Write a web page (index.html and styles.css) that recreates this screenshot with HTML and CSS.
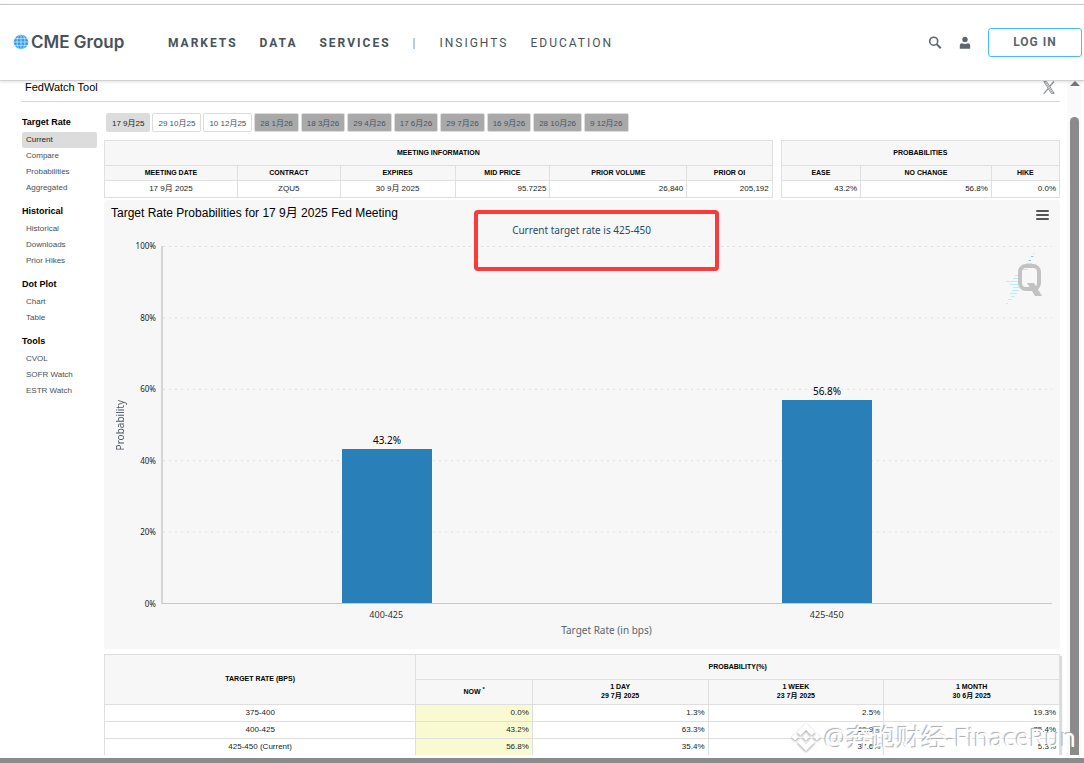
FILE: index.html
```html
<!DOCTYPE html>
<html lang="en">
  <head>
    <meta charset="UTF-8" />
    <meta name="viewport" content="width=device-width, initial-scale=1.0" />
    <title>FedWatch Tool - CME Group</title>
    <link rel="stylesheet" href="styles.css">
  </head>
  <body>
    <header class="site-header">
      <a class="logo" href="#">
        <svg class="logo-globe" viewBox="0 0 16 16" width="16" height="16">
          <circle cx="8" cy="8" r="7.2" fill="#2e9bf0" />
          <g fill="none" stroke="#d8eefd" stroke-width="0.7">
            <path d="M0 4.6h16M0 8h16M0 11.4h16M8 0v16" />
            <ellipse cx="8" cy="8" rx="4" ry="7.6" />
          </g>
        </svg>
        <span>CME Group</span>
      </a>
      <nav class="main-nav">
        <a class="strong" href="#">MARKETS</a>
        <a class="strong" href="#">DATA</a>
        <a class="strong" href="#">SERVICES</a>
        <span class="divider">|</span>
        <a href="#">INSIGHTS</a>
        <a href="#">EDUCATION</a>
      </nav>
      <div class="header-actions">
        <button class="icon-btn" aria-label="Search">
          <svg viewBox="0 0 14 14" width="14" height="14" fill="none" stroke="#5b666e">
            <circle cx="5.7" cy="5.2" r="4" stroke-width="1.6" />
            <path d="M8.6 8.1l4.2 4.2" stroke-width="2" />
          </svg>
        </button>
        <button class="icon-btn" aria-label="Account">
          <svg viewBox="0 0 12 14" width="12" height="14" fill="#5b666e">
            <circle cx="6" cy="3.5" r="2.7" />
            <path d="M0.8 12.8v-3.2q0-2.3 2.3-2.3q2.9 1.3 5.8 0q2.3 0 2.3 2.3v3.2z" />
          </svg>
        </button>
        <button class="login-btn">LOG IN</button>
      </div>
    </header>

    <div class="frame">
      <main class="content">
        <div class="tool-head">
          <h1>FedWatch Tool</h1>
          <a href="#" aria-label="Share on X">
            <svg viewBox="0 0 12 13" width="12" height="13" fill="none" stroke="#8d9297">
              <path d="M0.8 0.6h2.8l7.6 11.8h-2.8z" />
              <path d="M2.2 0.6l7.6 11.8" stroke-width="0.8" />
              <path d="M11 0.5l-4.4 5M5.4 7.4l-4.6 5.2" stroke-width="1.3" />
            </svg>
          </a>
        </div>

        <div class="tool-body">
          <aside class="sidebar">
            <section>
              <h2>Target Rate</h2>
              <a class="active" href="#">Current</a>
              <a href="#">Compare</a>
              <a href="#">Probabilities</a>
              <a href="#">Aggregated</a>
            </section>
            <section>
              <h2>Historical</h2>
              <a href="#">Historical</a>
              <a href="#">Downloads</a>
              <a href="#">Prior Hikes</a>
            </section>
            <section>
              <h2>Dot Plot</h2>
              <a href="#">Chart</a>
              <a href="#">Table</a>
            </section>
            <section>
              <h2>Tools</h2>
              <a href="#">CVOL</a>
              <a href="#">SOFR Watch</a>
              <a href="#">ESTR Watch</a>
            </section>
          </aside>

          <div class="panel">
            <div class="tabs">
              <button class="tab active">17 9月25</button>
              <button class="tab">29 10月25</button>
              <button class="tab">10 12月25</button>
              <button class="tab far">28 1月26</button>
              <button class="tab far">18 3月26</button>
              <button class="tab far">29 4月26</button>
              <button class="tab far">17 6月26</button>
              <button class="tab far">29 7月26</button>
              <button class="tab far">16 9月26</button>
              <button class="tab far">28 10月26</button>
              <button class="tab far">9 12月26</button>
            </div>

            <div class="info-row">
              <table class="meeting">
                <colgroup>
                  <col class="col-date">
                  <col class="col-contract">
                  <col class="col-expires">
                  <col class="col-price">
                  <col class="col-volume">
                  <col>
                </colgroup>
                <thead>
                  <tr class="group"><th colspan="6">MEETING INFORMATION</th></tr>
                  <tr>
                    <th>MEETING DATE</th>
                    <th>CONTRACT</th>
                    <th>EXPIRES</th>
                    <th>MID PRICE</th>
                    <th>PRIOR VOLUME</th>
                    <th>PRIOR OI</th>
                  </tr>
                </thead>
                <tbody>
                  <tr>
                    <td class="center">17 9月 2025</td>
                    <td class="center">ZQU5</td>
                    <td class="center">30 9月 2025</td>
                    <td>95.7225</td>
                    <td>26,840</td>
                    <td>205,192</td>
                  </tr>
                </tbody>
              </table>
              <table class="moves">
                <colgroup>
                  <col class="col-ease"><col class="col-same"><col>
                </colgroup>
                <thead>
                  <tr class="group"><th colspan="3">PROBABILITIES</th></tr>
                  <tr><th>EASE</th><th>NO CHANGE</th><th>HIKE</th></tr>
                </thead>
                <tbody>
                  <tr><td>43.2%</td><td>56.8%</td><td>0.0%</td></tr>
                </tbody>
              </table>
            </div>

            <div class="chart">
              <div class="chart-head">
                <h3>Target Rate Probabilities for 17 9月 2025 Fed Meeting</h3>
                <button class="menu-btn" aria-label="Chart menu"><i></i><i></i><i></i></button>
              </div>
              <p class="chart-subtitle">Current target rate is 425-450</p>
              <div class="highlight"></div>
              <div class="chart-grid">
                <div class="y-title">Probability</div>
                <div class="y-axis">
                  <span>100%</span>
                  <span>80%</span>
                  <span>60%</span>
                  <span>40%</span>
                  <span>20%</span>
                  <span>0%</span>
                </div>
                <div class="plot">
                  <div class="bar-slot">
                    <span class="bar-label">43.2%</span>
                    <div class="bar" style="height: 43.2%"></div>
                  </div>
                  <div class="bar-slot">
                    <span class="bar-label">56.8%</span>
                    <div class="bar" style="height: 56.8%"></div>
                  </div>
                </div>
                <div class="x-axis">
                  <span>400-425</span>
                  <span>425-450</span>
                </div>
                <div class="x-title">Target Rate (in bps)</div>
              </div>
              <svg class="quik-mark" viewBox="0 0 40 56" width="40" height="56">
                <g stroke="#b4f0fb" stroke-width="1.2">
                  <path d="M31 3.5h1.5M29 6.5h3M26 10.500h3M24 13.500h6M21 16.500h6M19 19.500h7M16 22.500h3M13 25.500h5M11 28.500h6M4 31.500h13M8 34.500h9M11 37.500h6M10 40.500h7M8 43.500h7M9 46.500h4M6 49.500h4M4 53.500h2" />
                </g>
                <path d="M29 6.500h2M27 10.500h2" stroke="#8fc3e6" />
                <rect x="18" y="16" width="19" height="23" rx="6" fill="none" stroke="#c2c2c2" stroke-width="4" />
                <path d="M25 33h7l8 13h-7z" fill="#c2c2c2" />
              </svg>
            </div>

            <table class="history">
              <colgroup>
                <col class="col-rate"><col class="col-now"><col><col><col>
              </colgroup>
              <thead>
                <tr class="group">
                  <th rowspan="2">TARGET RATE (BPS)</th>
                  <th colspan="4">PROBABILITY(%)</th>
                </tr>
                <tr class="group">
                  <th>NOW <sup>*</sup></th>
                  <th>1 DAY<br>29 7月 2025</th>
                  <th>1 WEEK<br>23 7月 2025</th>
                  <th>1 MONTH<br>30 6月 2025</th>
                </tr>
              </thead>
              <tbody>
                <tr>
                  <td class="center">375-400</td>
                  <td class="now">0.0%</td>
                  <td>1.3%</td>
                  <td>2.5%</td>
                  <td>19.3%</td>
                </tr>
                <tr>
                  <td class="center">400-425</td>
                  <td class="now">43.2%</td>
                  <td>63.3%</td>
                  <td>59.9%</td>
                  <td>75.4%</td>
                </tr>
                <tr>
                  <td class="center">425-450 (Current)</td>
                  <td class="now">56.8%</td>
                  <td>35.4%</td>
                  <td>37.6%</td>
                  <td>5.3%</td>
                </tr>
              </tbody>
            </table>
          </div>
        </div>
      </main>
      <div class="scrollbar">
        <div class="scroll-up"></div>
        <div class="scroll-thumb"></div>
      </div>
    </div>
    <div class="bottom-edge"></div>

    <div class="watermark">
      <svg viewBox="0 0 30 30" width="30" height="30" fill="#fff">
        <path d="M15 1l9 9-3.500 3.500-5.500-5.500-5.500 5.500-3.500-3.500z" />
        <path d="M15 29l9-9-3.500-3.500-5.500 5.500-5.500-5.500-3.500 3.500z" />
        <path d="M15 11.500l3.500 3.500-3.500 3.500-3.500-3.500z" />
        <path d="M4 11.500l3.500 3.500-3.500 3.500-3.500-3.500zM26 11.500l3.500 3.500-3.500 3.500-3.500-3.500z" />
      </svg>
      <span>@奔跑财经-FinaceRun</span>
    </div>
  </body>
</html>
```
FILE: styles.css
```css
* {
  margin: 0;
  padding: 0;
  box-sizing: border-box;
}

body {
  display: flex;
  flex-direction: column;
  height: 100vh;
  padding-top: 4px;
  position: relative;
  overflow: hidden;
  background: #fff;
  color: #000;
  font-family: "Liberation Sans", Arial, "Noto Sans CJK SC", sans-serif;
  font-size: 8px;
}

a {
  color: inherit;
  text-decoration: none;
}

button {
  font: inherit;
  border: none;
  background: none;
  cursor: pointer;
}

/* Header */
.site-header {
  display: flex;
  align-items: center;
  flex: none;
  height: 77px;
  padding: 0 2px 0 13px;
  border-top: 1px solid #c8c8c8;
  border-bottom: 1px solid #d2d2d2;
  box-shadow: 0 1px 3px rgba(0, 0, 0, 0.12);
  font-family: Roboto, "Liberation Sans", sans-serif;
  color: #47525a;
  z-index: 1;
}

.logo {
  display: flex;
  align-items: center;
  gap: 2px;
  width: 155px;
  padding-bottom: 2px;
  font-family: Inter, sans-serif;
  font-size: 17px;
  font-weight: 600;
  line-height: 18px;
}

.main-nav {
  display: flex;
  gap: 22px;
  font-size: 12px;
  letter-spacing: 2px;
}

.main-nav .strong {
  font-weight: 700;
}

.divider {
  color: #8b9297;
}

.header-actions {
  display: flex;
  align-items: center;
  gap: 17px;
  margin-left: auto;
}

.icon-btn {
  display: flex;
}

.login-btn {
  width: 94px;
  height: 29px;
  padding-bottom: 2px;
  border: 1px solid #3fc1f5;
  border-radius: 3px;
  color: #5b666e;
  font-size: 12px;
  font-weight: 700;
  letter-spacing: 1px;
}

/* Tool frame */
.frame {
  display: flex;
  flex: 1;
  min-height: 0;
  overflow: hidden;
}

.content {
  flex: 1;
  min-width: 0;
  padding: 0 7px 0 22px;
}

.tool-head {
  display: flex;
  align-items: center;
  justify-content: space-between;
  height: 21px;
  padding: 0 5px 8px 3px;
  border-bottom: 1px solid #d6d6d6;
}

.tool-head h1 {
  font-size: 11px;
  font-weight: 400;
}

.tool-head a {
  display: flex;
}

.tool-body {
  display: flex;
  gap: 7px;
  padding-top: 11px;
}

/* Sidebar */
.sidebar {
  width: 75px;
  padding-top: 2px;
}

.sidebar section {
  margin-bottom: 8px;
}

.sidebar h2 {
  margin-bottom: 3px;
  font-size: 9px;
  line-height: 14px;
}

.sidebar a {
  display: block;
  padding-left: 4px;
  line-height: 16px;
  color: #45505c;
}

.sidebar .active {
  background: #dcdcdc;
  border-radius: 2px;
  color: #222;
}

.panel {
  flex: 1;
  min-width: 0;
}

.tabs {
  display: flex;
  gap: 2px;
  padding-left: 2px;
}

.tab {
  height: 19px;
  padding: 0 5px 1px;
  border: 1px solid #dcdcdc;
  border-radius: 2px;
  color: #45505c;
  white-space: nowrap;
}

.tab.active {
  background: #dcdcdc;
  color: #222;
}

.tab.far {
  background: #a9a9a9;
  color: #44546c;
}

/* Tables */
.info-row {
  display: flex;
  gap: 8px;
  margin: 8px 0 2px;
}

table {
  width: 100%;
  border-collapse: collapse;
  table-layout: fixed;
}

.meeting {
  flex: 12;
}

.moves {
  flex: 5;
}

tr {
  height: 17px;
}

thead tr {
  height: 15px;
}

thead .group {
  height: 25px;
}

th,
td {
  padding-bottom: 2px;
  border: 1px solid #dfdfdf;
  line-height: 9px;
}

th {
  background: #f7f7f7;
  font-size: 7px;
}

td {
  padding-right: 3px;
  text-align: right;
  color: #222;
}

td.center {
  padding-right: 0;
  text-align: center;
}

.col-date {
  width: 19.9%;
}

.col-contract {
  width: 15.4%;
}

.col-expires {
  width: 17.2%;
}

.col-price {
  width: 14.2%;
}

.col-volume {
  width: 20.5%;
}

.col-ease {
  width: 28.5%;
}

.col-same {
  width: 47%;
}

.col-rate {
  width: 32.6%;
}

.col-now {
  width: 12.2%;
}

/* Chart */
.chart {
  position: relative;
  padding: 5px 8px 13px 7px;
  margin-bottom: 5px;
  border-radius: 3px;
  background: #f7f7f7;
  font-family: "Noto Sans", sans-serif;
}

.chart-head {
  display: flex;
  justify-content: space-between;
  height: 16px;
  padding-right: 3px;
}

.chart-head h3 {
  font: 400 12px/16px "Liberation Sans", Arial, "Noto Sans CJK SC", sans-serif;
}

.menu-btn {
  display: flex;
  flex-direction: column;
  align-self: center;
  gap: 2px;
  width: 13px;
  padding-top: 3px;
}

.menu-btn i {
  height: 2px;
  border-radius: 1px;
  background: #555;
}

.chart-subtitle {
  height: 25px;
  line-height: 18px;
  text-align: center;
  font-size: 10px;
  color: #274b6d;
}

.highlight {
  position: absolute;
  top: 10px;
  left: 370px;
  width: 245px;
  height: 61px;
  border: 4px solid #fc3a3a;
  border-radius: 4px;
  z-index: 1;
}

.chart-grid {
  display: grid;
  grid-template-columns: 18px 27px 1fr;
  grid-template-rows: 358px 20px 12px;
}

.y-title {
  align-self: center;
  writing-mode: vertical-rl;
  transform: rotate(180deg);
  line-height: 18px;
  font-size: 10px;
  color: #4d5866;
}

.y-axis {
  display: flex;
  flex-direction: column;
  justify-content: space-between;
  margin: -5px 0;
  text-align: right;
  line-height: 10px;
  color: #222;
}

.plot {
  display: flex;
  margin-left: 5px;
  padding: 0 5px 0 4px;
  border-left: 2px solid #d5d5d5;
  border-bottom: 1px solid #c8c8c8;
  background: repeating-linear-gradient(90deg, transparent 0 2px, #f7f7f7 2px 6px),
    linear-gradient(#ddd 1px, transparent 1px) 0 0 / 100% 20%;
}

.bar-slot {
  display: flex;
  flex: 1;
  flex-direction: column;
  align-items: center;
  justify-content: flex-end;
}

.bar {
  width: 90px;
  background: #2980b9;
}

.bar-label {
  line-height: 18px;
  font-size: 10px;
}

.x-axis {
  display: flex;
  grid-column: 3;
  margin-left: 5px;
  padding: 0 5px;
}

.x-axis span {
  flex: 1;
  text-align: center;
  line-height: 22px;
  font-size: 9px;
  color: #333;
}

.x-title {
  grid-column: 3;
  margin-left: 5px;
  text-align: center;
  line-height: 12px;
  font-size: 10px;
  color: #5a6570;
}

.quik-mark {
  position: absolute;
  top: 50px;
  right: 18px;
}

/* Probability history */
.history {
  box-shadow: 2px 2px 1px #d8dcdc;
}

.history sup {
  line-height: 0;
}

.history .now {
  background: #fafad2;
}

/* Scrollbar and window edge */
.scrollbar {
  display: flex;
  flex-direction: column;
  align-items: center;
  width: 15px;
  margin-right: 2px;
  background: #fafafa;
}

.scroll-up {
  border: 5px solid transparent;
  border-top: none;
  border-bottom: 5px solid #777;
}

.scroll-thumb {
  flex: 1;
  width: 9px;
  margin-top: 31px;
  border-radius: 5px 5px 0 0;
  background: #8b8b8b;
}

.bottom-edge {
  flex: none;
  height: 8px;
  border-top: 3px solid #fff;
  background: #8b8b8b;
}

.watermark {
  display: flex;
  align-items: center;
  gap: 3px;
  position: absolute;
  right: 8px;
  bottom: 11px;
  z-index: 2;
  color: #fff;
  font-family: "Noto Sans", "Noto Sans CJK SC", sans-serif;
  font-size: 25px;
  line-height: 30px;
  text-shadow: -1px -1px 1px #aaa;
  white-space: nowrap;
}

.watermark svg {
  filter: drop-shadow(0 1px 1px #999);
}
```
